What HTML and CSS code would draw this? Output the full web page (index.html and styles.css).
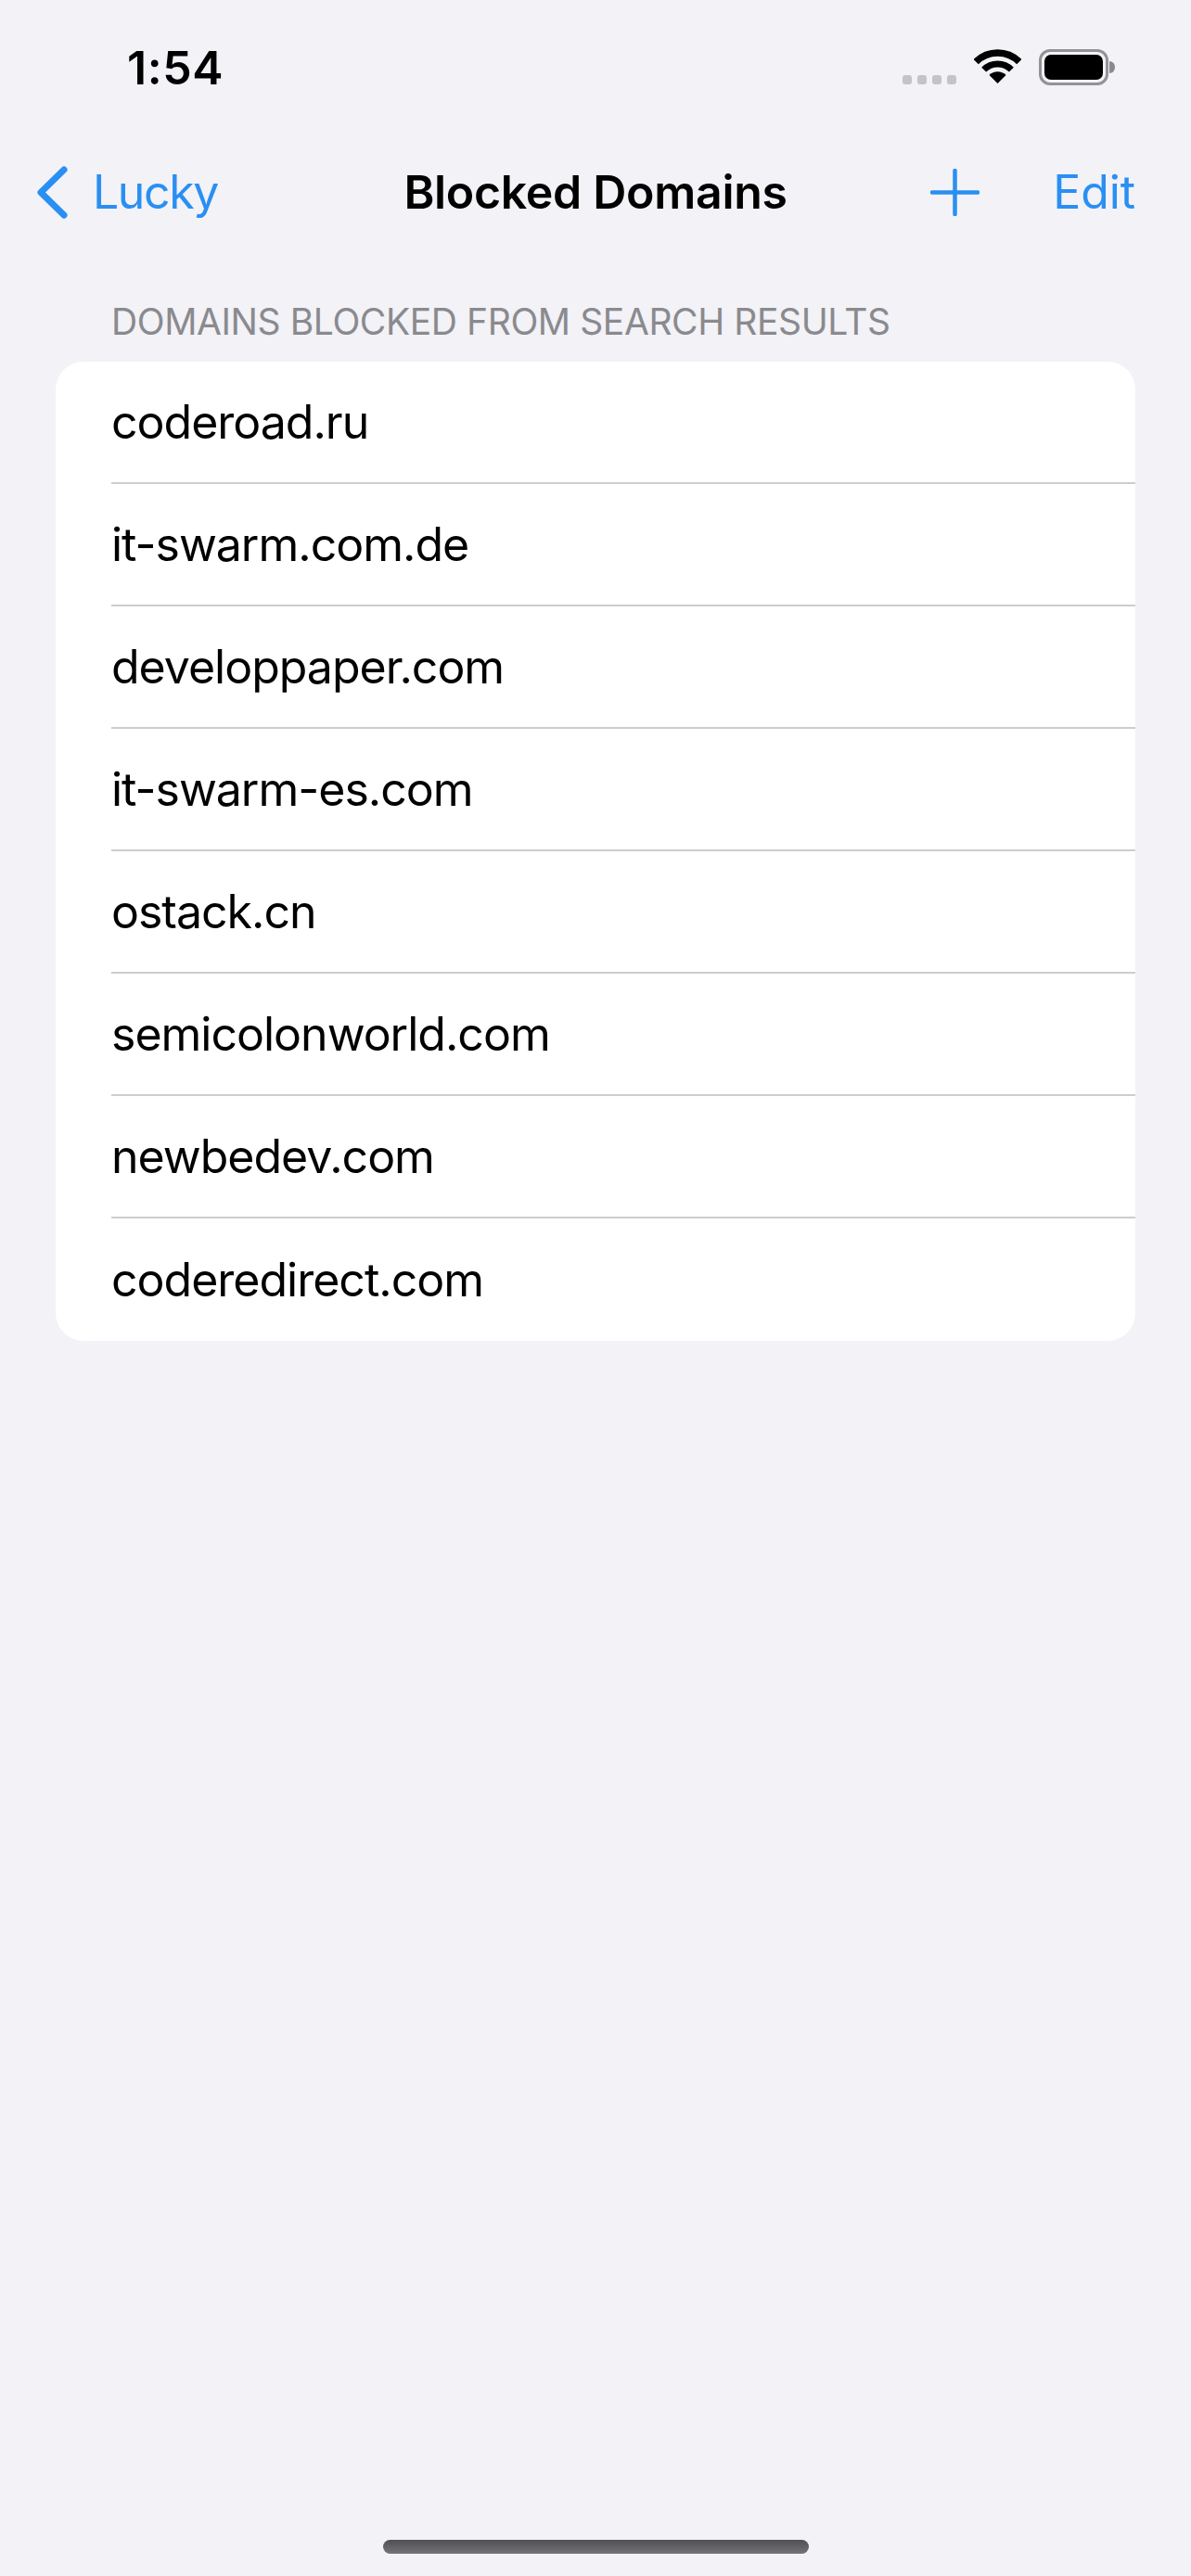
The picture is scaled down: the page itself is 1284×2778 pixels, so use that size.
FILE: index.html
```html
<!DOCTYPE html>
<html lang="en">
<head>
    <meta charset="UTF-8">
    <meta name="viewport" content="width=device-width, initial-scale=1.0">
    <title>Blocked Domains</title>
    <link rel="stylesheet" href="styles.css">
</head>
<body>
    <div class="screen">
        <div class="status-bar">
            <span class="time">1:54</span>
            <div class="status-icons">
                <div class="signal">
                    <span class="dot"></span>
                    <span class="dot"></span>
                    <span class="dot"></span>
                    <span class="dot"></span>
                </div>
                <svg class="wifi" width="51" height="37" viewBox="0 0 51 37">
                    <path d="M2.2 13.7A33 33 0 0 1 48.8 13.7" fill="none" stroke="#000" stroke-width="7.5"/>
                    <path d="M10.65 22.15A21 21 0 0 1 40.35 22.15" fill="none" stroke="#000" stroke-width="7"/>
                    <path d="M25.5 37L16.5 28A12.7 12.7 0 0 1 34.5 28Z" fill="#000"/>
                </svg>
                <div class="battery">
                    <div class="battery-body"><div class="battery-fill"></div></div>
                    <div class="battery-nub"></div>
                </div>
            </div>
        </div>

        <nav class="nav-bar">
            <a class="nav-back">
                <svg class="chevron" width="33" height="57" viewBox="0 0 33 57">
                    <path d="M29 4L4 28.5L29 53" fill="none" stroke="#2a8ff2" stroke-width="7" stroke-linecap="round" stroke-linejoin="round"/>
                </svg>
                <span>Lucky</span>
            </a>
            <h1 class="nav-title">Blocked Domains</h1>
            <div class="nav-actions">
                <svg class="plus" width="53" height="51" viewBox="0 0 53 51">
                    <path d="M26.5 2V49M2 25.5H51" fill="none" stroke="#2a8ff2" stroke-width="4.5" stroke-linecap="round"/>
                </svg>
                <a class="nav-edit">Edit</a>
            </div>
        </nav>

        <p class="section-label">DOMAINS BLOCKED FROM SEARCH RESULTS</p>
        <ul class="domain-list">
            <li>coderoad.ru</li>
            <li>it-swarm.com.de</li>
            <li>developpaper.com</li>
            <li>it-swarm-es.com</li>
            <li>ostack.cn</li>
            <li>semicolonworld.com</li>
            <li>newbedev.com</li>
            <li>coderedirect.com</li>
        </ul>

        <div class="home-indicator"></div>
    </div>
</body>
</html>
```

FILE: styles.css
```css
:root {
    --bg-color: #f2f2f7;
    --blue-color: #2a8ff2;
    --label-color: #8a8a8e;
    --line-color: #cdcdcf;
}

* {
    margin: 0;
    padding: 0;
    box-sizing: border-box;
}

body {
    background-color: var(--bg-color);
    color: #000;
    font-family: Inter, "Liberation Sans", sans-serif;
}

.screen {
    height: 2778px;
    display: flex;
    flex-direction: column;
}

.status-bar {
    height: 146px;
    display: flex;
    justify-content: space-between;
    padding: 46px 82px 0 137px;
}

.time {
    font-size: 50px;
    font-weight: 600;
    line-height: 54px;
    letter-spacing: 0.6px;
}

.status-icons {
    display: flex;
    align-items: flex-start;
    padding-top: 7px;
}

.signal {
    display: flex;
    gap: 6px;
    margin-top: 28px;
    margin-right: 19px;
}

.dot {
    width: 10px;
    height: 10px;
    border-radius: 3px;
    background-color: #c4c3c9;
}

.wifi {
    margin-right: 19px;
}

.battery {
    display: flex;
    align-items: center;
}

.battery-body {
    width: 75px;
    height: 39px;
    border: 3px solid #939396;
    border-radius: 12px;
    padding: 3px;
}

.battery-fill {
    height: 100%;
    background-color: #000;
    border-radius: 7px;
}

.battery-nub {
    width: 6px;
    height: 13px;
    margin-left: 1px;
    background-color: #8a8a8e;
    border-radius: 0 6px 6px 0;
}

.nav-bar {
    height: 122px;
    display: grid;
    grid-template-columns: 1fr auto 1fr;
    align-items: center;
    padding: 0 62px;
    font-size: 50px;
    letter-spacing: -1.4px;
}

.nav-back {
    display: flex;
    align-items: center;
    gap: 27px;
    margin-left: -22px;
    color: var(--blue-color);
}

.nav-title {
    font-size: 50px;
    font-weight: 600;
    letter-spacing: -0.3px;
}

.nav-actions {
    display: flex;
    justify-content: flex-end;
    align-items: center;
    gap: 79px;
    margin-right: -2px;
    color: var(--blue-color);
}

.nav-edit {
    letter-spacing: -0.1px;
}

.section-label {
    margin-top: 55px;
    padding-left: 120px;
    font-size: 39px;
    line-height: 48px;
    letter-spacing: -0.4px;
    color: var(--label-color);
    margin-bottom: 19px;
}

.domain-list {
    list-style: none;
    margin: 0 60px;
    padding-left: 60px;
    background-color: #fff;
    border-radius: 30px;
}

.domain-list li {
    height: 132px;
    display: flex;
    align-items: center;
    font-size: 50px;
    letter-spacing: -1px;
    border-bottom: 2px solid var(--line-color);
}

.domain-list li:last-child {
    border-bottom: none;
}

.home-indicator {
    width: 459px;
    height: 15px;
    margin: auto auto 24px;
    border-radius: 8px;
    background: linear-gradient(#505052, #747478);
}
```
